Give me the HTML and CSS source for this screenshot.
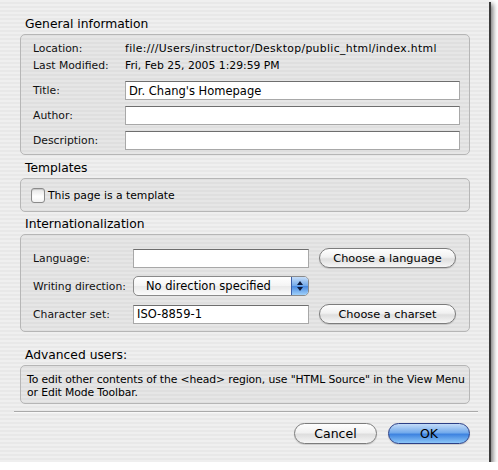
FILE: index.html
```html
<!DOCTYPE html>
<html lang="en">
<head>
    <meta charset="UTF-8">
    <title>Page Properties</title>
    <link rel="stylesheet" href="styles.css">
</head>
<body>

<div class="window">
    <div class="dialog">

        <!-- General information -->
        <div class="group">
            <h2 class="group-title">General information</h2>
            <div class="box box-general">
                <div class="info-row"><span class="label">Location:</span><span class="path">file:///Users/instructor/Desktop/public_html/index.html</span></div>
                <div class="info-row"><span class="label">Last Modified:</span><span>Fri, Feb 25, 2005 1:29:59 PM</span></div>
                <div class="field-row first-field">
                    <label class="label" for="title">Title:</label>
                    <input class="text-input" type="text" id="title" value="Dr. Chang's Homepage">
                </div>
                <div class="field-row">
                    <label class="label" for="author">Author:</label>
                    <input class="text-input" type="text" id="author">
                </div>
                <div class="field-row">
                    <label class="label" for="description">Description:</label>
                    <input class="text-input" type="text" id="description">
                </div>
            </div>
        </div>

        <!-- Templates -->
        <div class="group group-templates">
            <h2 class="group-title">Templates</h2>
            <div class="box box-templates">
                <label class="check-row"><span class="checkbox"></span>This page is a template</label>
            </div>
        </div>

        <!-- Internationalization -->
        <div class="group group-intl">
            <h2 class="group-title">Internationalization</h2>
            <div class="box box-intl">
                <span class="label">Language:</span>
                <input class="text-input" type="text">
                <button class="aqua-btn small-btn" type="button">Choose a language</button>

                <span class="label">Writing direction:</span>
                <div class="popup">
                    <span class="popup-text">No direction specified</span>
                    <span class="popup-arrows">
                        <svg width="8" height="12" viewBox="0 0 8 12"><path d="M4 1 L7 5 L1 5 Z M1 7 L7 7 L4 11 Z" fill="#0c1a3c"/></svg>
                    </span>
                </div>
                <span></span>

                <span class="label">Character set:</span>
                <input class="text-input" type="text" value="ISO-8859-1">
                <button class="aqua-btn small-btn" type="button">Choose a charset</button>
            </div>
        </div>

        <!-- Advanced users -->
        <div class="group group-advanced">
            <h2 class="group-title">Advanced users:</h2>
            <div class="box box-advanced">
                To edit other contents of the &lt;head&gt; region, use "HTML Source" in the View Menu<br>
                or Edit Mode Toolbar.
            </div>
        </div>

        <div class="separator"></div>

        <div class="button-row">
            <button class="aqua-btn" type="button">Cancel</button>
            <button class="aqua-btn default-btn" type="button">OK</button>
        </div>

    </div>
</div>

</body>
</html>
```
FILE: styles.css
```css
body { margin: 0; background: #fff; font-family: "DejaVu Sans", sans-serif; color: #000; }
.window { width: 489px; height: 462px; background: repeating-linear-gradient(to bottom, #efefef 0, #efefef 2px, #e8e8e8 2px, #e8e8e8 4px); box-shadow: 2px 2px 0 #3a3a3a, 4px 4px 5px rgba(0, 0, 0, 0.55); }
.dialog { padding: 16px 19px 0 20px; }

.group-title { margin: 0 0 2px 5px; font-size: 12.3px; font-weight: normal; line-height: 16px; }
.group-templates { margin-top: 5px; }
.group-intl { margin-top: 4px; }
.group-advanced { margin-top: 15px; }

.box { border: 1px solid #b6b6b6; border-radius: 5px; background: rgba(0, 0, 0, 0.035); font-size: 10.8px; }
.label { color: #111; }

.box-general { padding: 5px 9px 4px 12px; }
.info-row { display: grid; grid-template-columns: 92px 1fr; line-height: 17px; white-space: nowrap; }
.path { letter-spacing: 0.35px; }
.field-row { display: grid; grid-template-columns: 92px 1fr; align-items: center; margin-top: 6px; }
.first-field { margin-top: 7px; }

.text-input { height: 19px; box-sizing: border-box; margin: 0; padding: 0 3px; border: 1px solid #a8a8a8; border-top-color: #6e6e6e; background: #fff; font-family: "DejaVu Sans", sans-serif; font-size: 11.5px; color: #000; outline: none; }

.box-templates { padding: 9px 10px 8px; }
.check-row { display: flex; align-items: center; gap: 3px; height: 15px; }
.checkbox { width: 14px; height: 15px; box-sizing: border-box; border: 1px solid #8a8a8a; border-radius: 3px; background: linear-gradient(to bottom, #e6e6e6, #ffffff 60%, #f2f2f2); box-shadow: inset 0 1px 1px rgba(0, 0, 0, 0.15); }

.box-intl { display: grid; grid-template-columns: 90px 176px 137px; column-gap: 10px; row-gap: 8px; grid-auto-rows: 20px; align-items: center; padding: 13px 10px 7px 12px; }
.box-intl .label { white-space: nowrap; }
.box-intl .text-input { width: 176px; }

.popup { display: flex; height: 20px; box-sizing: border-box; border: 1px solid #8a8a8a; border-radius: 5px; overflow: hidden; background: linear-gradient(to bottom, #ffffff, #f4f4f4 50%, #e9e9e9 50%, #fbfbfb); }
.popup-text { flex: 1; padding-left: 12px; line-height: 18px; font-size: 11.5px; }
.popup-arrows { width: 16px; display: flex; align-items: center; justify-content: center; border-left: 1px solid #3b5ea8; background: linear-gradient(to bottom, #c6ddf8, #74aaea 48%, #4a8ae0 52%, #9fd0fa); }

.aqua-btn { height: 21px; padding: 0; border: 1px solid #7c7c7c; border-radius: 11px; background: linear-gradient(to bottom, #fefefe 0%, #f1f1f1 45%, #dedede 55%, #f6f6f6 100%); font-family: "DejaVu Sans", sans-serif; font-size: 12.5px; color: #000; box-shadow: 0 1px 1px rgba(0, 0, 0, 0.15); }
.small-btn { height: 20px; font-size: 11.3px; border-radius: 10px; }

.box-advanced { padding: 7px 6px 4px 6px; line-height: 13px; white-space: nowrap; letter-spacing: -0.1px; }

.separator { height: 1px; margin: 7px -8px 0 -6px; background: #a9a9a9; border-bottom: 1px solid #f8f8f8; }

.button-row { display: flex; justify-content: flex-end; gap: 11px; margin-top: 10px; }
.button-row .aqua-btn { width: 83px; }
.button-row .default-btn { width: 82px; border-color: #2c3f86; background: linear-gradient(to bottom, #c4dcf8 0%, #74abec 45%, #3f84e0 55%, #8cc6f8 100%); }
```
